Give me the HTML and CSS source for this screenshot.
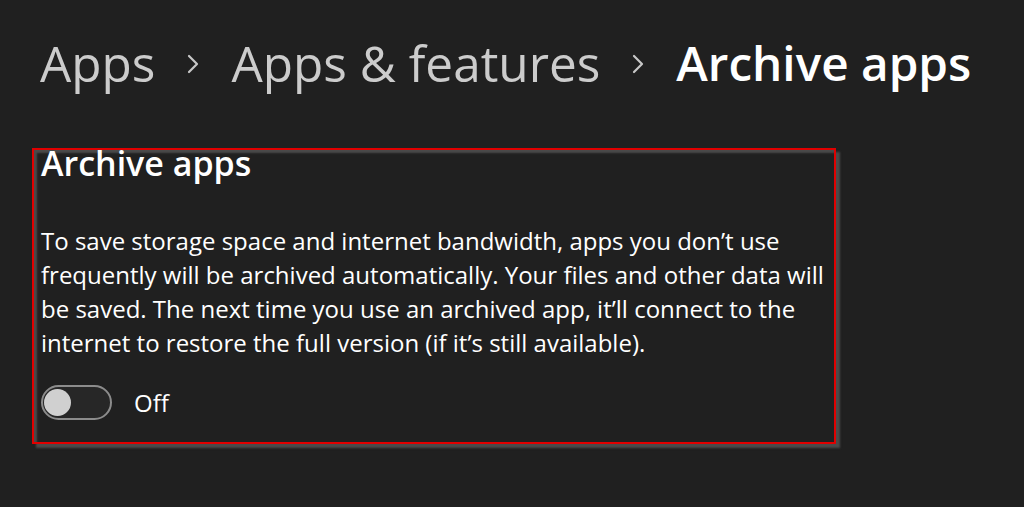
FILE: index.html
```html
<!DOCTYPE html>
<html lang="en">
<head>
<meta charset="utf-8">
<title>Archive apps</title>
<link rel="stylesheet" href="styles.css">
</head>
<body>
<main class="page">
  <nav class="crumbs">
    <span class="crumb">Apps</span>
    <svg class="sep" viewBox="0 0 12 20" width="12" height="20" aria-hidden="true"><path d="M2 2 L10 10 L2 18" fill="none" stroke="#c8c8c8" stroke-width="2.2" stroke-linecap="round" stroke-linejoin="round"/></svg>
    <span class="crumb">Apps &amp; features</span>
    <svg class="sep" viewBox="0 0 12 20" width="12" height="20" aria-hidden="true"><path d="M2 2 L10 10 L2 18" fill="none" stroke="#c8c8c8" stroke-width="2.2" stroke-linecap="round" stroke-linejoin="round"/></svg>
    <span class="crumb current">Archive apps</span>
  </nav>
  <section class="card">
    <h2 class="card-title">Archive apps</h2>
    <p class="card-text">To save storage space and internet bandwidth, apps you don’t use<br>frequently will be archived automatically. Your files and other data will<br>be saved. The next time you use an archived app, it’ll connect to the<br>internet to restore the full version (if it’s still available).</p>
    <label class="toggle-row">
      <span class="toggle"><span class="knob"></span></span>
      <span class="toggle-label">Off</span>
    </label>
  </section>
</main>
</body>
</html>
```

FILE: styles.css
```css
html, body {
  margin: 0;
  padding: 0;
  background: #202020;
  height: 100%;
}
body {
  font-family: "Open Sans", "Noto Sans", sans-serif;
  color: #ffffff;
  overflow: hidden;
}
.page {
  padding: 28px 0 0 40px;
}
.crumbs {
  display: flex;
  align-items: center;
  height: 70px;
  white-space: nowrap;
}
.crumb {
  color: #cccccc;
  font-size: 49.5px;
  line-height: 70px;
}
.crumb.current {
  color: #ffffff;
  font-weight: 600;
  font-size: 47.7px;
}
.sep {
  flex: none;
  margin: 2px 32px 0 32px;
}
.card {
  margin: 50px 0 0 -8px;
  width: 804px;
  height: 296px;
  box-sizing: border-box;
  border: 2px solid #e00000;
  padding: 0 0 0 7px;
  box-shadow: 4px 4px 2px #4a4a4a, inset 3px 3px 2px #4a4a4a;
}
.card-title {
  margin: 0;
  font-size: 34px;
  font-weight: 600;
  line-height: 26px;
}
.card-text {
  margin: 48px 0 0;
  font-size: 24px;
  line-height: 34px;
  white-space: nowrap;
  color: #ffffff;
}
.toggle-row {
  display: flex;
  align-items: center;
  gap: 22px;
  margin-top: 25px;
}
.toggle {
  width: 71px;
  height: 35px;
  box-sizing: border-box;
  border: 2px solid #8c8c8c;
  border-radius: 18px;
  background: #272727;
  display: flex;
  align-items: center;
  padding-left: 1px;
}
.knob {
  width: 27px;
  height: 27px;
  border-radius: 50%;
  background: #d0d0d0;
}
.toggle-label {
  font-size: 24px;
}
```
